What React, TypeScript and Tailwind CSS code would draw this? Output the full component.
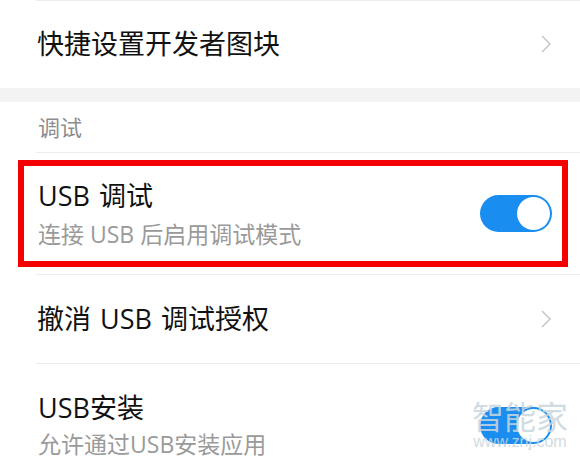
const font = { fontFamily: '"Open Sans", "Noto Sans CJK SC", sans-serif' };

function Chevron() {
  return (
    <svg width="12" height="20" viewBox="0 0 12 20" className="mr-[28px]">
      <path d="M2 2 L10 10 L2 18" fill="none" stroke="#c6c6c6" strokeWidth="1.5" />
    </svg>
  );
}

function Toggle() {
  return (
    <div className="flex h-[37px] w-[72px] items-center justify-end rounded-full bg-[#1a8df0] px-[2px]">
      <div className="h-[33px] w-[33px] rounded-full bg-white" />
    </div>
  );
}

export default function App() {
  return (
    <div className="h-[465px] w-[580px] overflow-hidden bg-white" style={font}>
      <div className="ml-[36px] h-px bg-[#ececec]" />
      <div className="flex h-[87px] items-center justify-between pb-px pl-[37px]">
        <span className="text-[27px] leading-8 text-[#111]">快捷设置开发者图块</span>
        <Chevron />
      </div>
      <div className="h-[14px] bg-[#f3f3f3]" />

      <div className="flex h-[50px] items-center pl-[38px]">
        <span className="text-[22px] text-[#8c8c8c]">调试</span>
      </div>
      <div className="ml-[36px] h-px bg-[#ececec]" />

      <div className="py-[7px] pl-[18px] pr-[12px]">
        <div className="flex h-[107px] items-center justify-between border-[6px] border-[#f40000] pl-[14px] pr-[10px]">
          <div className="flex flex-col">
            <span className="text-[27px] leading-8 text-[#111] [word-spacing:2px]">USB 调试</span>
            <span className="mt-[8px] text-[23px] leading-[28px] text-[#9a9a9a]">
              连接 USB 后启用调试模式
            </span>
          </div>
          <Toggle />
        </div>
      </div>
      <div className="ml-[36px] h-px bg-[#ececec]" />

      <div className="flex h-[88px] items-center justify-between pl-[37px]">
        <span className="text-[27px] leading-8 text-[#111] [word-spacing:2px]">撤消 USB 调试授权</span>
        <Chevron />
      </div>
      <div className="ml-[36px] h-px bg-[#ececec]" />

      <div className="relative flex items-center justify-between pl-[38px] pr-[28px] pt-[28px]">
        <div className="flex flex-col">
          <span className="text-[27px] leading-8 text-[#111]">USB安装</span>
          <span className="mt-[6px] text-[23px] leading-[28px] text-[#9a9a9a]">允许通过USB安装应用</span>
        </div>
        <Toggle />
        <div className="absolute right-[12px] top-[36px] flex flex-col items-center text-[#c9d6de] opacity-85">
          <span className="text-[32px] leading-[34px]">智能家</span>
          <span
            className="text-[16px] leading-[16px]"
            style={{ fontFamily: '"Liberation Sans", sans-serif' }}
          >
            www.znj.com
          </span>
        </div>
      </div>
    </div>
  );
}
